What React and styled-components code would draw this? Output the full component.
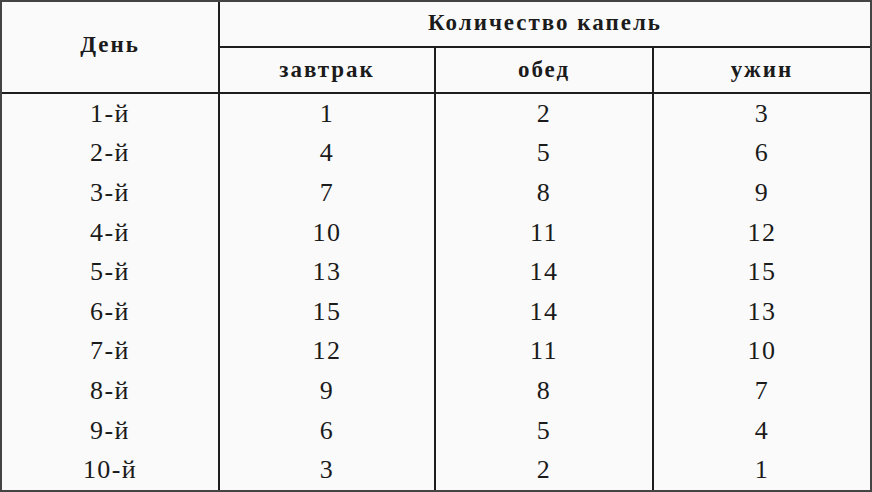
import React from "react";
import styled, { createGlobalStyle } from "styled-components";

const Global = createGlobalStyle`
  html, body { margin: 0; padding: 0; background: #fafafa; }
  body { width: 872px; height: 492px; overflow: hidden; }
`;

const Grid = styled.div`
  box-sizing: border-box;
  width: 872px;
  height: 492px;
  display: grid;
  grid-template-columns: 218px 216px 218px 1fr;
  grid-template-rows: 46px 46px repeat(10, 1fr);
  border: 2px solid #444;
  background: #fafafa;
  color: #1b1b1b;
  font-family: "Liberation Serif", "Times New Roman", serif;
`;

const Head = styled.div`
  box-sizing: border-box;
  display: flex;
  align-items: center;
  justify-content: center;
  font-weight: 700;
  font-size: 23px;
  letter-spacing: 2px;
  border-bottom: 2px solid #1e1e1e;
  border-right: ${(p) => (p.$last ? "none" : "2px solid #1e1e1e")};
  grid-row: ${(p) => p.$row || "auto"};
  grid-column: ${(p) => p.$col || "auto"};
  padding-bottom: ${(p) => p.$pb || 0}px;
`;

const Cell = styled.div`
  box-sizing: border-box;
  display: flex;
  align-items: center;
  justify-content: center;
  font-size: 26px;
  letter-spacing: 1.4px;
  border-right: ${(p) => (p.$last ? "none" : "2px solid #1e1e1e")};
`;

const rows = [
  ["1-й", 1, 2, 3],
  ["2-й", 4, 5, 6],
  ["3-й", 7, 8, 9],
  ["4-й", 10, 11, 12],
  ["5-й", 13, 14, 15],
  ["6-й", 15, 14, 13],
  ["7-й", 12, 11, 10],
  ["8-й", 9, 8, 7],
  ["9-й", 6, 5, 4],
  ["10-й", 3, 2, 1],
];

export default function App() {
  return (
    <>
      <Global />
      <Grid>
        <Head $row="span 2" $pb={4}>День</Head>
        <Head $col="span 3" $last $pb={2}>Количество капель</Head>
        <Head>завтрак</Head>
        <Head>обед</Head>
        <Head $last>ужин</Head>
        {rows.map((r) =>
          r.map((v, i) => (
            <Cell key={r[0] + i} $last={i === 3}>
              {v}
            </Cell>
          ))
        )}
      </Grid>
    </>
  );
}
